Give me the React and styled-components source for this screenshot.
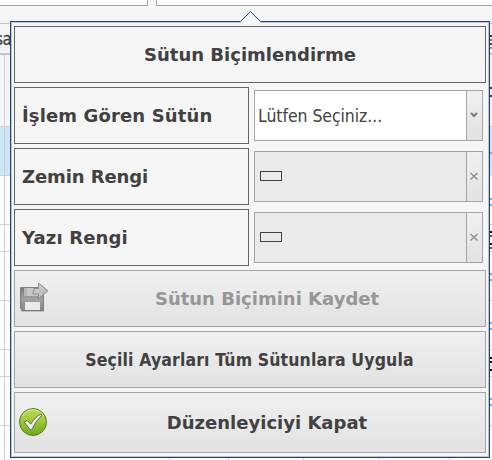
import { useState } from "react";
import styled, { createGlobalStyle } from "styled-components";

const GlobalStyle = createGlobalStyle`
  * {
    box-sizing: border-box;
  }
  body {
    margin: 0;
    background-color: #fff;
    color: #414141;
    font-family: "DejaVu Sans", Verdana, sans-serif;
    overflow: hidden;
  }
`;
const Page = styled.div`
  position: relative;
  width: 492px;
  height: 460px;
  overflow: hidden;
`;
const TopBar = styled.div`
  display: grid;
  grid-template-columns: 148px 336px;
  column-gap: 8px;
  height: 23px;
  background-color: #f5f5f5;
`;
const TopInput = styled.div`
  height: 6px;
  background-color: #fff;
  border: solid #a5a5a5;
  border-width: ${(p) => (p.$first ? "0 1px 1px 0" : "0 0 1px 1px")};
`;
const GridHeader = styled.div`
  display: flex;
  justify-content: space-between;
  height: 32px;
  border-top: 1px solid #c4c4c4;
  border-bottom: 2px solid #c4c4c4;
  background-color: #f5f5f5;
  font: 17px/30px "DejaVu Sans Condensed", "DejaVu Sans", sans-serif;
  font-stretch: condensed;
`;
const HeaderText = styled.span`
  width: 11px;
  overflow: hidden;
  white-space: nowrap;
  text-indent: -5px;
  letter-spacing: -0.5px;
  -webkit-text-stroke: 0.3px;
`;
const GridRow = styled.div`
  display: flex;
  justify-content: space-between;
  height: ${(p) => p.$height}px;
  background-color: ${(p) => p.$bg || "#fff"};
  border-bottom: 1px solid #d2d2d2;
`;
const FirstCell = styled.div`
  width: 5px;
  border-right: 1px solid #cfcfcf;
`;
const EdgeCell = styled.div`
  display: flex;
  flex-direction: column;
  gap: ${(p) => p.$gap || 4}px;
  width: 2px;
  padding-top: ${(p) => p.$top}px;
`;
const Mark = styled.i`
  width: 2px;
  height: 2px;
  background-color: ${(p) => p.$color};
`;
const LastRow = styled.div`
  display: grid;
  grid-template-columns: 5px 165px 59px 75px 75px 71px;
  height: 34px;
  & > div {
    border-right: 1px solid #cfcfcf;
  }
`;
const Popup = styled.div`
  position: absolute;
  left: 10px;
  top: 21px;
  display: flex;
  flex-direction: column;
  gap: 4px;
  width: 480px;
  height: 437px;
  padding: 4px 3px;
  background-color: #f6f6f6;
  border: 1px solid #1b4585;
  box-shadow: inset 0 0 0 1px #c3c3c3;
`;
const Arrow = styled.svg`
  position: absolute;
  left: 229px;
  top: -12px;
`;
const Title = styled.div`
  display: flex;
  align-items: center;
  justify-content: center;
  height: 57px;
  border: 1px solid #646464;
  background-color: #f5f5f5;
`;
const Row = styled.div`
  display: grid;
  grid-template-columns: 235px 229px;
  column-gap: 5px;
  align-items: center;
  height: 57px;
`;
const Label = styled.label`
  display: flex;
  align-items: center;
  height: 57px;
  padding-left: 7px;
  border: 1px solid #646464;
  background-color: #f5f5f5;
`;
const Bold = styled.span`
  font-size: 18px;
  font-weight: 700;
  line-height: 22px;
  white-space: nowrap;
  letter-spacing: ${(p) => p.$spacing || 0}px;
`;
const Narrow = styled.span`
  font-family: "DejaVu Sans Condensed", "DejaVu Sans", sans-serif;
  font-stretch: condensed;
  font-size: 17.5px;
  font-weight: ${(p) => p.$weight || 400};
  line-height: 22px;
  white-space: nowrap;
  letter-spacing: ${(p) => p.$spacing || 0}px;
`;
const Field = styled.div`
  display: flex;
  height: 51px;
  border: 1px solid #a5a5a5;
  background-color: ${(p) => (p.$disabled ? "#eaeaea" : "#fff")};
`;
const FieldValue = styled.div`
  display: flex;
  align-items: center;
  flex: 1;
  padding-left: ${(p) => (p.$swatch ? 5 : 3)}px;
`;
const Swatch = styled.span`
  width: 22px;
  height: 10px;
  margin-bottom: 1px;
  border: 1px solid #414141;
`;
const FieldButton = styled.button`
  display: flex;
  align-items: center;
  justify-content: center;
  width: 16px;
  padding: 0 1px 1px 0;
  border: 0;
  border-left: 1px solid #a5a5a5;
  background: linear-gradient(#f0f0f0, #e2e2e2);
`;
const Button = styled.button`
  display: grid;
  grid-template-columns: ${(p) => (p.$icon ? "34px 1fr" : "1fr")};
  align-items: center;
  justify-items: center;
  height: ${(p) => p.$height || 57}px;
  padding: 0 1px 0 ${(p) => (p.$icon ? 1 : 0)}px;
  border: 1px solid #a5a5a5;
  color: ${(p) => (p.$disabled ? "#969696" : "#414141")};
  background: linear-gradient(#f0f0f0, #e2e2e2);
  font-family: inherit;
  & > svg {
    margin-bottom: 1px;
  }
`;

const SaveIcon = () => (
  <svg width="32" height="32" viewBox="0 0 32 32">
    <defs>
      <linearGradient id="disk" x1="0" y1="0" x2="0" y2="1">
        <stop offset="0" stopColor="#777" />
        <stop offset=".5" stopColor="#a2a2a2" />
        <stop offset="1" stopColor="#858585" />
      </linearGradient>
      <linearGradient id="arrow" x1="0" y1="0" x2="1" y2="1">
        <stop offset="0" stopColor="#ddd" />
        <stop offset="1" stopColor="#aaa" />
      </linearGradient>
    </defs>
    <path d="M3.5 5.5h23v23h-21l-2-2z" fill="url(#disk)" stroke="#808080" />
    <path d="M7 6h14v8H7z" fill="#c8c8c8" />
    <path d="M7 6h3v8H7z" fill="#b5b5b5" />
    <path d="M8 20h15v8H8z" fill="#ebebeb" />
    <path d="M4 28.8h23" stroke="#777" />
    <path
      d="M17 6.5h4.5v-5.5l9.5 7.8-9.5 8.2v-5h-5.5v-2.5h1z"
      fill="url(#arrow)"
      stroke="#8c8c8c"
    />
  </svg>
);
const CheckIcon = () => (
  <svg width="32" height="32" viewBox="0 0 32 32">
    <defs>
      <linearGradient id="green" x1="0" y1="0" x2="0" y2="1">
        <stop offset="0" stopColor="#bddb55" />
        <stop offset=".5" stopColor="#9bc736" />
        <stop offset="1" stopColor="#73a321" />
      </linearGradient>
    </defs>
    <circle cx="16" cy="16" r="13.5" fill="url(#green)" stroke="#568022" />
    <path d="M5.5 10a12 12 0 0 1 21 0" fill="none" stroke="#d7ed82" />
    <path
      d="M7.3 16.2l3-1.7 3.4 3.7q4.2-7.2 10.5-10.3l.7 1.4q-6.4 5.7-10.2 14.3l-1.5.1z"
      fill="#edf1fa"
      stroke="#5c7845"
    />
  </svg>
);

const colorFields = [
  { name: "Zemin Rengi", spacing: -0.1 },
  { name: "Yazı Rengi", spacing: 0.15 },
];
const blue = "#62b5ee";

const App = () => {
  const [open, setOpen] = useState(true);
  return (
    <Page>
      <GlobalStyle />
      <TopBar>
        <TopInput $first />
        <TopInput />
      </TopBar>
      <GridHeader>
        <HeaderText>sa</HeaderText>
        <EdgeCell $top={11} $gap={2}>
          <Mark $color="#414141" />
          <Mark $color="#777" />
          <Mark $color="#414141" />
          <Mark $color="#bd9063" />
        </EdgeCell>
      </GridHeader>
      <GridRow $height={72} $bg="#f5f5f5">
        <FirstCell />
        <EdgeCell $top={32} $gap={6}>
          <Mark $color="#414141" />
          <Mark $color="#414141" />
        </EdgeCell>
      </GridRow>
      {/* selected record */}
      <GridRow $height={49} $bg="#cde6f7">
        <FirstCell />
        <EdgeCell $top={25}>
          <Mark $color={blue} />
        </EdgeCell>
      </GridRow>
      <GridRow $height={49}>
        <FirstCell />
        <EdgeCell $top={22}>
          <Mark $color={blue} />
          <Mark $color={blue} />
        </EdgeCell>
      </GridRow>
      <GridRow $height={27}>
        <FirstCell />
        <EdgeCell $top={6} $gap={2}>
          <Mark $color="#111" />
          <Mark $color="#555" />
          <Mark $color="#fff" />
          <Mark $color="#111" />
          <Mark $color="#555" />
        </EdgeCell>
      </GridRow>
      {[49, 49].map((height, i) => (
        <GridRow key={i} $height={height}>
          <FirstCell />
          <EdgeCell $top={21}>
            <Mark $color={blue} />
            <Mark $color={blue} />
          </EdgeCell>
        </GridRow>
      ))}
      <GridRow $height={27}>
        <FirstCell />
        <EdgeCell $top={7} $gap={2}>
          <Mark $color="#111" />
          <Mark $color="#111" />
          <Mark $color="#ddd" />
          <Mark $color="#111" />
        </EdgeCell>
      </GridRow>
      <GridRow $height={49}>
        <FirstCell />
        <EdgeCell $top={21}>
          <Mark $color={blue} />
          <Mark $color={blue} />
        </EdgeCell>
      </GridRow>
      <LastRow>
        {[0, 1, 2, 3, 4, 5].map((cell) => (
          <div key={cell} />
        ))}
      </LastRow>
      {open && (
        <Popup>
          <Arrow width="22" height="13">
            <path d="M.5 11.5L10.5 1.5L20.5 11.5V13H.5z" fill="#f6f6f6" />
            <path d="M.5 11.5L10.5 1.5L20.5 11.5" fill="none" stroke="#1b4585" />
          </Arrow>
          <Title>
            <Bold>Sütun Biçimlendirme</Bold>
          </Title>
          <Row>
            <Label>
              <Bold $spacing={0.13}>İşlem Gören Sütün</Bold>
            </Label>
            <Field>
              <FieldValue>
                <Narrow $spacing={-0.06}>Lütfen Seçiniz...</Narrow>
              </FieldValue>
              <FieldButton>
                <svg width="8" height="6" viewBox="0 0 8 6">
                  <path d="M1 1l3 3 3-3" fill="none" stroke="#777" strokeWidth="2" />
                </svg>
              </FieldButton>
            </Field>
          </Row>
          {colorFields.map(({ name, spacing }) => (
            <Row key={name}>
              <Label>
                <Bold $spacing={spacing}>{name}</Bold>
              </Label>
              <Field $disabled>
                <FieldValue $swatch>
                  <Swatch />
                </FieldValue>
                <FieldButton>
                  <svg width="8" height="8" viewBox="0 0 8 8">
                    <path d="M.5 1l7 6.5M7.5 1l-7 6.5" stroke="#8c8c8c" strokeWidth="1.4" />
                  </svg>
                </FieldButton>
              </Field>
            </Row>
          ))}
          <Button $icon $disabled>
            <SaveIcon />
            <Bold>Sütun Biçimini Kaydet</Bold>
          </Button>
          <Button>
            <Narrow $weight={700} $spacing={0.12}>
              Seçili Ayarları Tüm Sütunlara Uygula
            </Narrow>
          </Button>
          <Button $icon $height={61} onClick={() => setOpen(false)}>
            <CheckIcon />
            <Bold>Düzenleyiciyi Kapat</Bold>
          </Button>
        </Popup>
      )}
    </Page>
  );
};

export default App;
